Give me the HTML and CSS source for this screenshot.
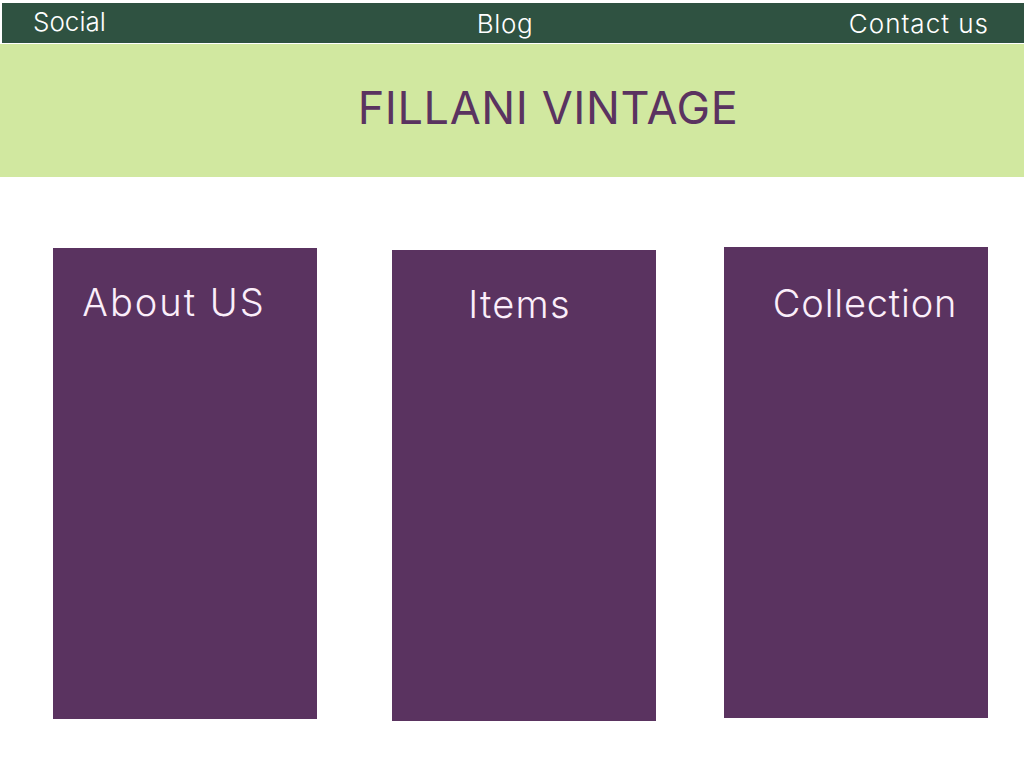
FILE: index.html
```html
<!DOCTYPE html>
<html lang="en">
<head>
<meta charset="utf-8">
<title>Fillani Vintage</title>
<link rel="stylesheet" href="styles.css">
</head>
<body>
<nav class="topnav">
  <a class="nav-link nav-social" href="#">Social</a>
  <a class="nav-link nav-blog" href="#">Blog</a>
  <a class="nav-link nav-contact" href="#">Contact us</a>
</nav>
<header class="banner">
  <h1 class="brand">FILLANI VINTAGE</h1>
</header>
<main class="cards">
  <section class="card card-about"><h2 class="card-title">About US</h2></section>
  <section class="card card-items"><h2 class="card-title">Items</h2></section>
  <section class="card card-collection"><h2 class="card-title">Collection</h2></section>
</main>
</body>
</html>
```

FILE: styles.css
```css
* { box-sizing: border-box; }
html, body { margin: 0; padding: 0; background: #ffffff; }
body {
  font-family: Inter, "Noto Sans", "Liberation Sans", sans-serif;
  width: 1024px;
  height: 768px;
  overflow: hidden;
}
.topnav {
  margin: 3px 0 0 2px;
  height: 41px;
  background: #2f5241;
  border-bottom: 1px solid #ffffff;
  display: grid;
  grid-template-columns: 1fr auto 1fr;
  align-items: center;
  padding: 0 35px 0 31px;
}
.nav-link {
  color: #ffffff;
  text-decoration: none;
  font-size: 26px;
  font-weight: 300;
  line-height: 1;
  letter-spacing: 0.6px;
}
.nav-social { justify-self: start; margin-top: -2px; letter-spacing: 0; }
.nav-blog { justify-self: center; margin-left: -12px; margin-top: 2px; }
.nav-contact { justify-self: end; letter-spacing: 1px; margin-top: 1px; }
.banner {
  height: 133px;
  background: #d1e8a0;
  display: flex;
  align-items: center;
  justify-content: center;
  padding-left: 72px;
  padding-bottom: 6px;
}
.brand {
  margin: 0;
  color: #5a3360;
  font-size: 45px;
  font-weight: 400;
  letter-spacing: 0.6px;
  line-height: 1;
}
.cards {
  display: flex;
  align-items: flex-start;
  padding: 70px 0 0 53px;
  gap: 75px;
}
.card {
  width: 264px;
  height: 471px;
  background: #5a3360;
  color: #fbeefa;
}
.card-about { margin-top: 1px; }
.card-items { margin-top: 3px; }
.card-collection { margin-top: 0; margin-left: -7px; }
.card-title {
  margin: 0;
  font-size: 38px;
  font-weight: 300;
  line-height: 1;
  text-align: center;
  padding-top: 35px;
  letter-spacing: 1.2px;
}
.card-about .card-title { padding-right: 22px; letter-spacing: 2px; }
.card-items .card-title { padding-right: 9px; }
.card-collection .card-title { padding-left: 18px; padding-top: 37px; letter-spacing: 0.8px; }
```
